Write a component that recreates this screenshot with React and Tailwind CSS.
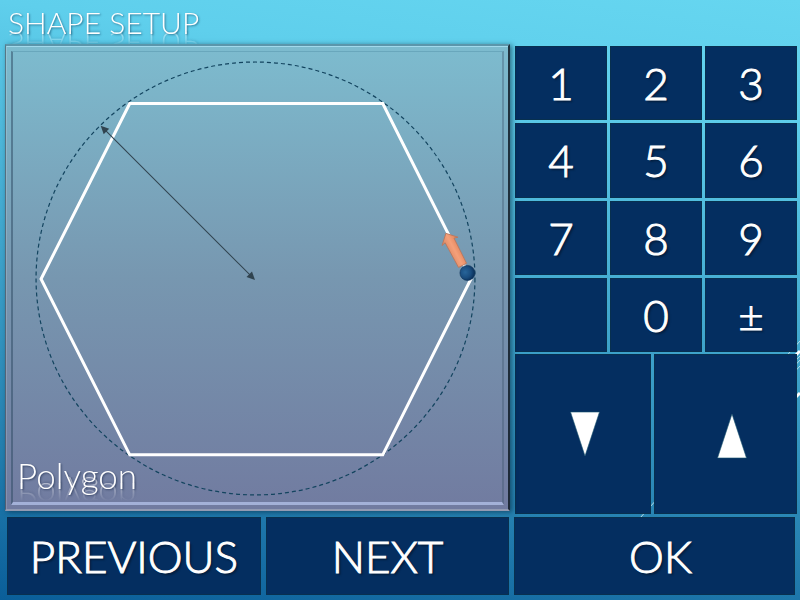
const KEYS = ["1", "2", "3", "4", "5", "6", "7", "8", "9", "", "0", "±"];

const keyStyle =
  "flex min-w-0 items-center justify-center border border-[#08304f] bg-[#042e60] text-[44px] leading-none text-white [-webkit-text-stroke:1px_white] [text-shadow:2px_2px_2px_rgba(0,0,0,0.4)]";

function Streaks() {
  return (
    <svg
      className="pointer-events-none absolute inset-0 h-full w-full"
      viewBox="0 0 800 600"
      preserveAspectRatio="none"
      aria-hidden="true"
    >
      <g stroke="#b5dcea" fill="none">
        <path d="M640 518 L800 341" strokeWidth="1" />
        <path d="M780 371 L800 351" strokeWidth="3" stroke="#fff" />
        <path d="M780 377 L800 356" strokeWidth="1" />
        <path d="M780 382 L800 360" strokeWidth="1" />
        <path d="M780 388 L800 366" strokeWidth="1" />
        <path d="M780 413 L800 393" strokeWidth="3" stroke="#fff" />
      </g>
    </svg>
  );
}

function PolygonDrawing() {
  return (
    <svg
      className="block h-auto w-full"
      viewBox="13 52 488 449"
      role="img"
      aria-label="Hexagon inscribed in a circle"
    >
      <defs>
        <radialGradient id="dot" cx="0.35" cy="0.45" r="0.7">
          <stop offset="0" stopColor="#28659a" />
          <stop offset="0.55" stopColor="#194c7e" />
          <stop offset="1" stopColor="#06284f" />
        </radialGradient>
        <linearGradient id="arrow" x1="0" x2="1" y1="0" y2="0">
          <stop offset="0" stopColor="#d98560" />
          <stop offset="0.5" stopColor="#f5a07a" />
          <stop offset="1" stopColor="#dc7d53" />
        </linearGradient>
      </defs>
      <ellipse
        cx="255"
        cy="278"
        rx="219"
        ry="216"
        fill="none"
        stroke="#13445f"
        strokeWidth="1.2"
        strokeDasharray="4 3"
      />
      <polygon
        points="41,278.500 129.500,103.500 382,103.500 470,278.500 382,454 129.500,454"
        fill="none"
        stroke="#fff"
        strokeWidth="3"
      />
      <path d="M104 129 L251 276" stroke="#30434f" strokeWidth="1" />
      <path d="M100.500 125.500 L109 128.500 L103.500 134 Z" fill="#30434f" />
      <path d="M254.500 279.500 L246 276.500 L251.500 271 Z" fill="#30434f" />
      <g transform="translate(445 233) rotate(-27.500)">
        <path
          d="M0 0 L9 9 L5 8 L4.500 36 L-4.500 36 L-5 8 L-9 9 Z"
          fill="url(#arrow)"
          stroke="#b8765d"
          strokeWidth="0.8"
        />
      </g>
      <circle cx="466.500" cy="272.500" r="7.500" fill="url(#dot)" stroke="#0b3159" strokeWidth="0.6" />
    </svg>
  );
}

export default function App() {
  return (
    <div className="relative flex min-h-screen flex-col bg-[linear-gradient(188deg,#66d6f0_0%,#5fcfec_16%,#3fa5cc_50%,#2580b0_78%,#0a5e99_100%)] font-['Century_Gothic',Lato,sans-serif] font-light text-white">
      <Streaks />
      <header className="relative flex h-11 items-center px-2">
        <h1 className="text-[30px] leading-8 font-light [-webkit-box-reflect:below_-10px_linear-gradient(transparent_40%,rgba(255,255,255,0.6))] [text-shadow:1px_1px_2px_rgba(0,40,70,0.5)]">
          SHAPE SETUP
        </h1>
      </header>

      <main className="relative grid flex-1 grid-cols-[505fr_282fr] gap-x-[5px] pr-[3px] pl-[5px]">
        <section className="relative self-start bg-gradient-to-b from-[#7dbccf] via-[#7797b0] to-[#717ba0] shadow-[2px_1px_5px_rgba(0,30,50,0.55)]">
          <div className="border-t-2 border-r-2 border-b-2 border-l border-t-[#1f506a]/35 border-r-[#101c26]/85 border-b-[#aab2c0]/60 border-l-[#3c4a55]/60">
            <div className="border-t border-l border-t-[#b2e8fa]/70 border-l-white/15 p-1">
              <div className="border-t border-r-2 border-b-3 border-l-2 border-t-[#3d7890]/30 border-r-[#3a5068]/35 border-b-[#b9c8f0]/70 border-l-[#2e4a62]/50">
                <PolygonDrawing />
              </div>
            </div>
          </div>
          <p className="absolute bottom-4 left-3 text-[35px] leading-10 [-webkit-box-reflect:below_-18px_linear-gradient(transparent_40%,rgba(255,255,255,0.6))] [text-shadow:1px_1px_2px_rgba(0,20,50,0.5)]">
            Polygon
          </p>
        </section>

        <section className="grid grid-rows-[307fr_160fr] gap-0.5 pt-0.5" aria-label="Keypad">
          <div className="grid grid-cols-3 grid-rows-4 gap-[3px]">
            {KEYS.map((key, i) => (
              <button key={i} type="button" className={keyStyle}>
                {key}
              </button>
            ))}
          </div>
          <div className="grid grid-cols-[136fr_142fr] gap-[3px]">
            <button type="button" aria-label="Decrease" className={`${keyStyle} pl-1`}>
              <svg width="30" height="46" viewBox="0 0 30 46" aria-hidden="true">
                <path d="M0.500 1 H29.500 L15 45 Z" fill="#fff" stroke="#15516c" strokeWidth="0.6" />
              </svg>
            </button>
            <button type="button" aria-label="Increase" className={`${keyStyle} pt-1 pl-3`}>
              <svg width="30" height="46" viewBox="0 0 30 46" aria-hidden="true">
                <path d="M0.500 45 H29.500 L15 1 Z" fill="#fff" stroke="#15516c" strokeWidth="0.6" />
              </svg>
            </button>
          </div>
        </section>
      </main>

      <footer className="relative grid h-[86px] grid-cols-[254fr_243fr_281fr] gap-[5px] pt-[3px] pr-[5px] pb-[5px] pl-[7px]">
        <button type="button" className={keyStyle}>PREVIOUS</button>
        <button type="button" className={keyStyle}>NEXT</button>
        <button type="button" className={`${keyStyle} pl-3`}>OK</button>
      </footer>
    </div>
  );
}
